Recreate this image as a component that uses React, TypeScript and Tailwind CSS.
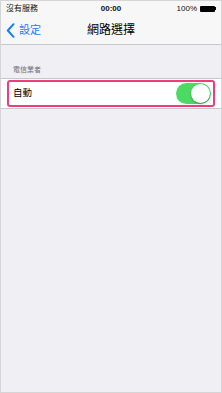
import React, { useState } from 'react';

const font = { fontFamily: '"Helvetica Neue", "Liberation Sans", "Noto Sans CJK TC", sans-serif' };

const StatusBar: React.FC = () => (
  <div className="flex h-[15px] items-center justify-between px-[5px] text-[8px] leading-none text-[#111]">
    <span className="w-[60px]">沒有服務</span>
    <span className="font-bold">00:00</span>
    <div className="flex w-[60px] items-center justify-end gap-[3px]">
      <span>100%</span>
      <div className="flex items-center">
        <div className="h-[6px] w-[15px] rounded-[1px] bg-black" />
        <div className="h-[3px] w-[1px] bg-black" />
      </div>
    </div>
  </div>
);

export default function App() {
  const [on, setOn] = useState(true);

  return (
    <div
      className="h-[393px] w-[222px] overflow-hidden border border-[#d5d5d8] bg-[#efeff4]"
      style={font}
    >
      <div className="bg-[#f7f7f8]">
        <StatusBar />
        {/* Nav bar */}
        <div className="relative flex h-[29px] items-center border-b border-[#c8c7cc]">
          <div className="flex items-center pl-[5px] text-[#157efb]">
            <svg width="9" height="15" viewBox="0 0 9 15" fill="none">
              <path d="M7.5 1.2L1.8 7.5l5.7 6.3" stroke="#157efb" strokeWidth="2" strokeLinecap="round" strokeLinejoin="round" />
            </svg>
            <span className="ml-[4px] text-[11px]">設定</span>
          </div>
          <span className="absolute left-1/2 -translate-x-1/2 text-[12px] text-black">網路選擇</span>
        </div>
      </div>

      {/* Section */}
      <div className="px-[12px] pb-[5px] pt-[21px] text-[7px] leading-none text-[#6d6d72]">電信業者</div>
      <div className="border-y border-[#c8c7cc] bg-white py-[1px]">
        <div className="mx-[6px] flex h-[27px] items-center justify-between rounded-[3px] border-2 border-[#ee3d7b] pl-[4px] pr-[2px]">
          <span className="text-[9.5px] text-black">自動</span>
          <button
            onClick={() => setOn(!on)}
            className={`relative h-[21px] w-[35px] rounded-full ${on ? 'bg-[#4cd964]' : 'bg-[#e5e5ea]'}`}
          >
            <span
              className={`absolute top-[1px] h-[19px] w-[19px] rounded-full bg-white shadow-[0_1px_2px_rgba(0,0,0,0.35)] ${on ? 'left-[15px]' : 'left-[1px]'}`}
            />
          </button>
        </div>
      </div>
    </div>
  );
}
